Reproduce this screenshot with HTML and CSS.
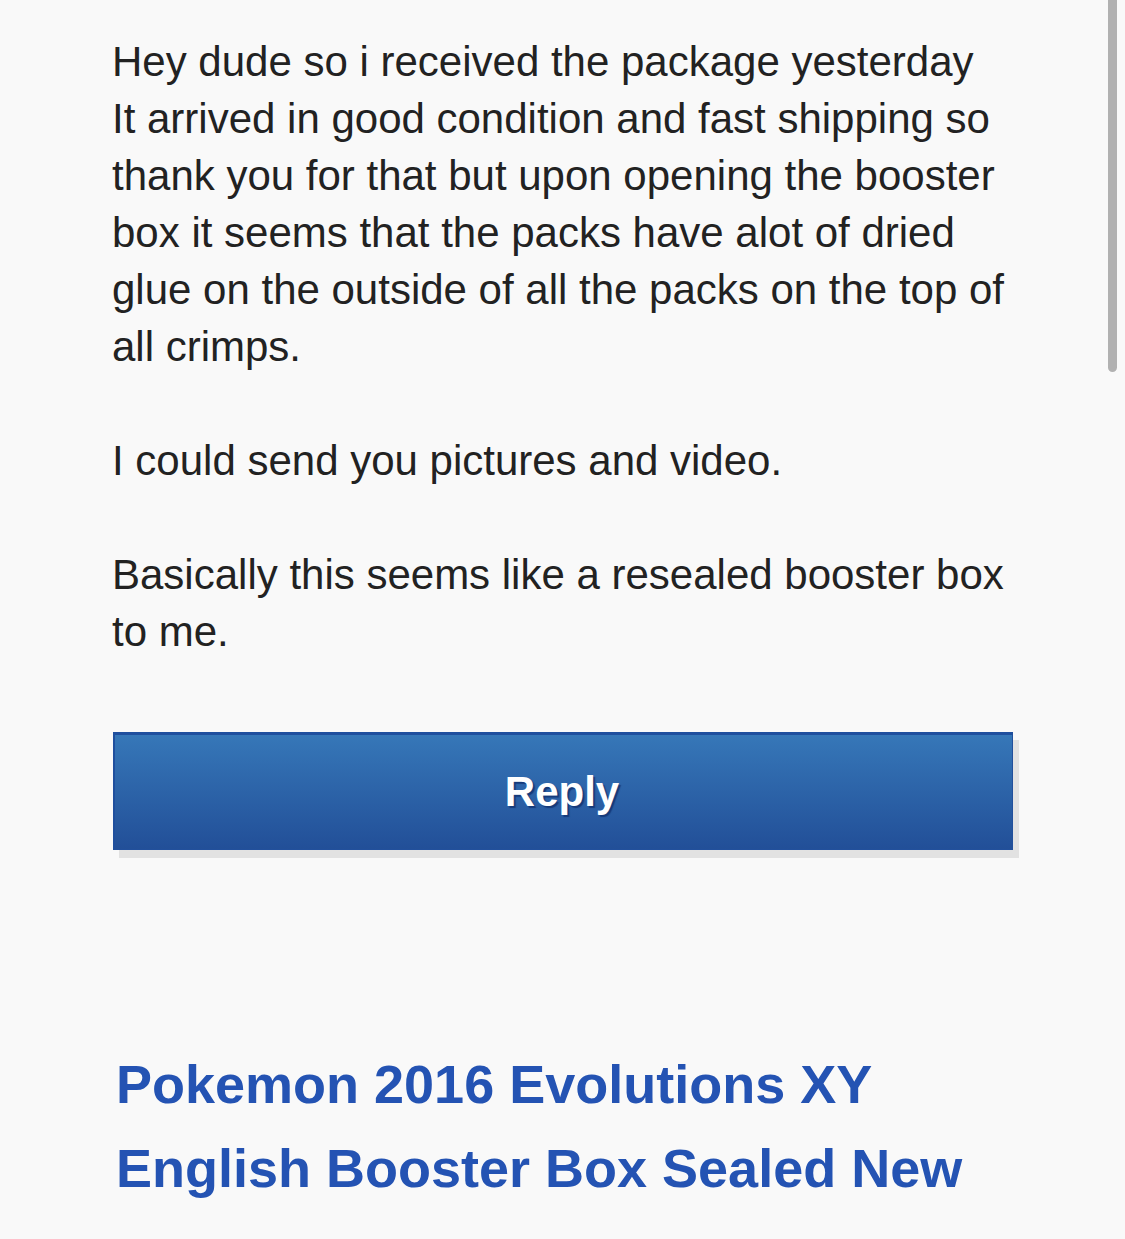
FILE: index.html
```html
<!DOCTYPE html>
<html lang="en">

<head>
    <meta charset="UTF-8">
    <meta name="viewport" content="width=device-width, initial-scale=1.0">
    <title>Message</title>
    <link rel="stylesheet" href="styles.css">
</head>

<body>

    <div class="page">
        <div class="message">
            <p>Hey dude so i received the package yesterday<br>It arrived in good condition and fast shipping so thank you for that but upon opening the booster box it seems that the packs have alot of dried glue on the outside of all the packs on the top of all crimps.</p>
            <p>I could send you pictures and video.</p>
            <p>Basically this seems like a resealed booster box to me.</p>
        </div>

        <button class="reply-btn">Reply</button>

        <h1 class="item-title">Pokemon 2016 Evolutions XY English Booster Box Sealed New</h1>
    </div>

    <div class="scrollbar"></div>

</body>

</html>
```

FILE: styles.css
```css
body {
    font-family: "Liberation Sans", Arial, sans-serif;
    background: #f9f9f9;
    color: #222;
    margin: 0;
    padding: 0;
}

.page {
    width: 901px;
    padding: 33px 0 0 112px;
}

.message p {
    font-size: 42px;
    line-height: 57px;
    margin: 0 0 57px 0;
}

.message p:last-child {
    margin-bottom: 0;
}

.reply-btn {
    display: block;
    box-sizing: border-box;
    width: 900px;
    height: 118px;
    margin: 72px 0 0 1px;
    background: linear-gradient(#3677b8, #224f98);
    border: 1px solid #22509c;
    border-top: 3px solid #1f4f9e;
    border-left: 2px solid #1f4f9e;
    color: white;
    font-family: "Liberation Sans", Arial, sans-serif;
    font-size: 42px;
    font-weight: bold;
    text-shadow: 2px 2px 1px #163a7a;
    box-shadow: 6px 8px 0 #e2e2e2;
    padding: 0 3px 0 0;
}

.item-title {
    color: #2453b3;
    font-size: 54px;
    line-height: 84px;
    margin: 192px 0 0 4px;
    width: 880px;
}

.scrollbar {
    position: fixed;
    top: 0;
    right: 8px;
    width: 9px;
    height: 372px;
    background: #b1b1b1;
    border-radius: 0 0 5px 5px;
}
```
